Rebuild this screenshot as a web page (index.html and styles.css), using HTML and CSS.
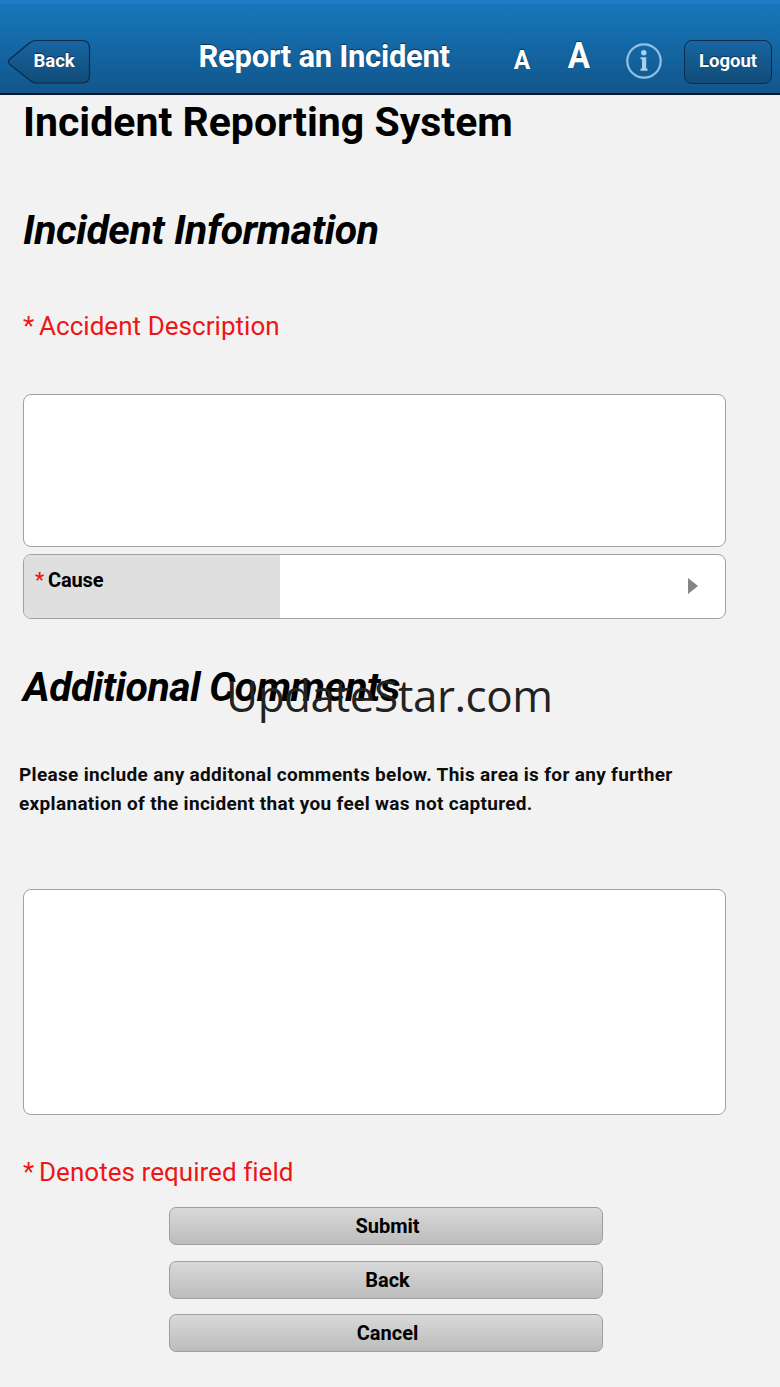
FILE: index.html
```html
<!DOCTYPE html>
<html lang="en">
<head>
<meta charset="utf-8">
<title>Report an Incident</title>
<link rel="stylesheet" href="styles.css">
</head>
<body>
<header class="bar">
  <a class="back">
    <svg class="back-shape" width="84" height="46" viewBox="0 0 84 46">
      <defs><linearGradient id="g" x1="0" y1="0" x2="0" y2="1"><stop offset="0" stop-color="#1865a2"/><stop offset="1" stop-color="#114c78"/></linearGradient></defs>
      <path d="M30 1.500H75Q82.500 1.500 82.500 9V36.500Q82.500 44 75 44H30Q25.500 44 22.500 41L3 25.500Q0 22.700 3 20L21 5Q25 1.500 30 1.500Z" fill="url(#g)" stroke="#0a2b49" stroke-width="1.200"/>
    </svg>
    <span class="back-text">Back</span>
  </a>
  <div class="title"><span>Report an Incident</span></div>
  <span class="font-small">A</span>
  <span class="font-large">A</span>
  <svg class="info" width="38" height="38" viewBox="0 0 38 38" fill="none">
    <circle cx="19" cy="19" r="16.700" stroke="#94c0e3" stroke-width="2.200"/>
    <circle cx="18.800" cy="10.800" r="2.700" fill="#a9cfec"/>
    <path d="M15.500 15.300H21.200V26.500H22.500V28.700H15.500V26.500H17V17.300H15.500Z" fill="#a9cfec"/>
  </svg>
  <a class="logout">Logout</a>
</header>
<main class="page">
  <h1 class="heading"><span>Incident Reporting System</span></h1>
  <h2 class="section"><span>Incident Information</span></h2>
  <p class="required"><span class="star">*</span><span>Accident Description</span></p>
  <div class="box box-description"></div>
  <div class="cause">
    <div class="cause-label"><span class="cause-star">*</span><span>Cause</span></div>
    <div class="cause-value"><svg width="10" height="16" viewBox="0 0 10 16"><path d="M0 0L10 8L0 16Z" fill="#858585"/></svg></div>
  </div>
  <h2 class="section section-comments"><span>Additional Comments</span></h2>
  <p class="help">Please include any additonal comments below. This area is for any further<br>explanation of the incident that you feel was not captured.</p>
  <div class="box box-comments"></div>
  <p class="required required-note"><span class="star">*</span><span>Denotes required field</span></p>
  <div class="actions">
    <div class="button">Submit</div>
    <div class="button">Back</div>
    <div class="button">Cancel</div>
  </div>
</main>
<div class="watermark">UpdateStar.com</div>
</body>
</html>
```
FILE: styles.css
```css
* { box-sizing: border-box; }
body {
  margin: 0;
  height: 1387px;
  position: relative;
  overflow: hidden;
  background: #f2f2f2;
  color: #000;
  font-family: Roboto, "Liberation Sans", sans-serif;
}
h1, h2, p { margin: 0; white-space: nowrap; }
.bar {
  display: flex;
  align-items: flex-start;
  height: 95px;
  background: linear-gradient(#1e7ec6 0, #1e7ec6 3px, #1777bb 4px, #11568c 100%);
  border-bottom: 2px solid #0b1824;
  color: #fff;
  font-weight: 700;
  text-shadow: 0 -1px 1px rgba(0, 20, 50, .6);
}
.back { position: relative; width: 84px; height: 46px; margin: 39px 0 0 7px; }
.back-shape { display: block; }
.back-text { position: absolute; left: 26.500px; top: 10px; font-size: 18.500px; line-height: 24px; }
.title { width: 288px; margin: 37px 0 0 107.500px; font-size: 31px; line-height: 40px; letter-spacing: -.28px; white-space: nowrap; }
.font-small { width: 30px; margin: 43px 0 0 20.500px; text-align: center; font-size: 26px; line-height: 34px; transform: scaleX(.94); }
.font-large { width: 40px; margin: 34px 0 0 21.500px; text-align: center; font-size: 36px; line-height: 44px; transform: scaleX(.92); }
.info { margin: 42px 0 0 26.500px; }
.logout {
  width: 88px;
  height: 44px;
  margin: 40px 0 0 20.500px;
  padding-left: 1px;
  border: 1px solid #0a2b49;
  border-radius: 8px;
  background: linear-gradient(#1865a2, #114c78);
  text-align: center;
  font-size: 18.500px;
  line-height: 41px;
}
.page { padding: 3px 0 0 23px; }
.heading { font-size: 41px; line-height: 48px; }
.section { margin-top: 60px; font-size: 41px; line-height: 48px; font-style: italic; letter-spacing: -.44px; }
.required { margin-top: 56px; display: flex; font-size: 26px; line-height: 32px; letter-spacing: .04px; color: #ee1515; }
.star { width: 16px; }
.box { width: 703px; background: #fff; border: 1px solid #a0a0a0; border-radius: 8px; }
.box-description { height: 153px; margin-top: 52px; }
.cause {
  display: flex;
  width: 703px;
  height: 65px;
  margin-top: 7px;
  overflow: hidden;
  background: #fff;
  border: 1px solid #a0a0a0;
  border-radius: 8px;
}
.cause-label { display: flex; width: 256px; padding: 12px 0 0 11px; background: #dfdfdf; font-size: 20px; line-height: 26px; font-weight: 700; letter-spacing: -.15px; }
.cause-star { width: 13px; color: #ee1515; }
.cause-value { display: flex; flex: 1; align-items: center; justify-content: flex-end; padding: 0 27px 1px 0; }
.section-comments { margin-top: 44px; letter-spacing: -.57px; }
.help { margin: 49px 0 0 -4px; font-size: 19px; line-height: 29px; font-weight: 700; letter-spacing: .32px; color: #0c0c0c; }
.box-comments { height: 226px; margin-top: 71px; }
.required-note { margin-top: 41px; letter-spacing: .04px; }
.actions { display: flex; flex-direction: column; gap: 15.500px; width: 434px; margin: 19px 0 0 146px; }
.button {
  height: 38px;
  padding-left: 3px;
  border: 1px solid #9e9e9e;
  border-radius: 7px;
  background: linear-gradient(#d9d9d9, #bcbcbc);
  text-align: center;
  font-size: 20px;
  line-height: 36px;
  font-weight: 700;
}
.watermark {
  position: absolute;
  left: 226px;
  top: 665px;
  font-family: "Open Sans", "Noto Sans", sans-serif;
  font-size: 44px;
  line-height: 60px;
  letter-spacing: -.45px;
  color: #222;
  white-space: nowrap;
}
```
